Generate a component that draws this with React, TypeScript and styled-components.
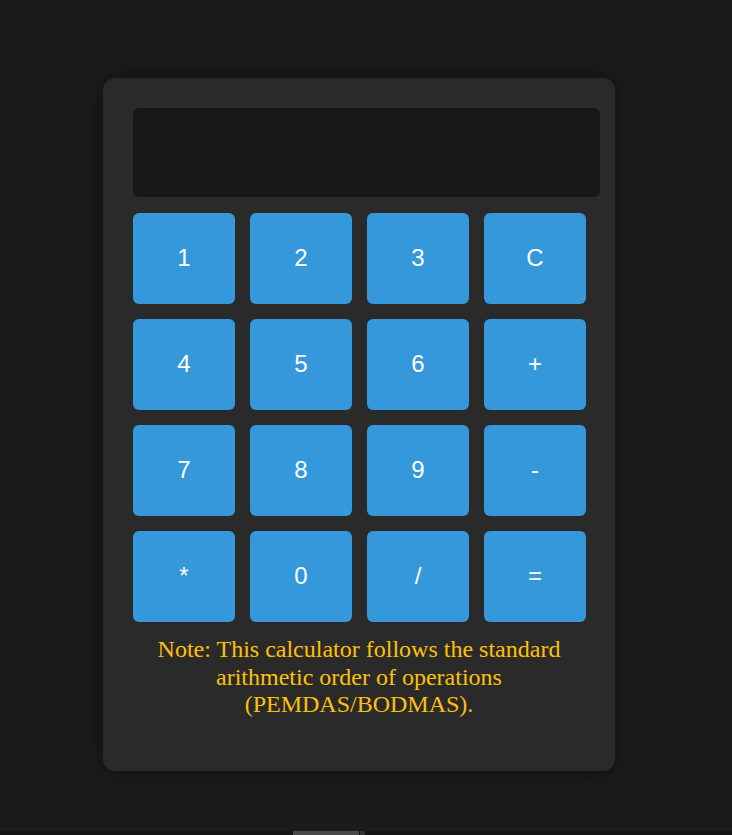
import React from "react";
import styled, { createGlobalStyle } from "styled-components";

const Global = createGlobalStyle`
  html, body { margin: 0; padding: 0; background: #1b1b1b; }
  body { font-family: "Liberation Serif", "Times New Roman", serif; min-height: 835px; }
`;

const Page = styled.div`
  display: flex;
  align-items: flex-start;
  padding: 78px 0 0 103px;
`;

const Card = styled.div`
  width: 512px;
  box-sizing: border-box;
  padding: 30px 15px 30px 30px;
  background: #2a2a2a;
  border-radius: 12px;
  box-shadow: 0 0 20px rgba(0, 0, 0, 0.45);
  display: flex;
  flex-direction: column;
`;

const Display = styled.div`
  height: 89px;
  background: #171717;
  border-radius: 6px;
  margin-bottom: 16px;
`;

const Keys = styled.div`
  display: grid;
  grid-template-columns: repeat(4, 102px);
  grid-auto-rows: 91px;
  column-gap: 15px;
  row-gap: 15px;
`;

const Key = styled.button`
  border: none;
  border-radius: 6px;
  background: #3498db;
  color: #ffffff;
  font-family: "Liberation Sans", Arial, sans-serif;
  font-size: 24px;
  display: flex;
  align-items: center;
  justify-content: center;
  padding: 0 0 2px;
  cursor: pointer;
`;

const Note = styled.p`
  width: 452px;
  margin: 14px 0 22px;
  text-align: center;
  color: #ffc107;
  font-family: "Liberation Serif", "Times New Roman", serif;
  font-size: 24px;
  line-height: 27.6px;
`;

const ScrollTrack = styled.div`
  position: fixed;
  left: 0;
  right: 0;
  bottom: 0;
  height: 4px;
  background: #141414;
`;

const ScrollThumb = styled.div`
  position: absolute;
  left: 293px;
  width: 66px;
  top: 0;
  bottom: 0;
  background: #4a4a4a;
`;

const ScrollNub = styled.div`
  position: absolute;
  left: 360px;
  width: 5px;
  top: 0;
  bottom: 0;
  background: #333333;
`;

const keys = ["1", "2", "3", "C", "4", "5", "6", "+", "7", "8", "9", "-", "*", "0", "/", "="];

export default function App() {
  return (
    <>
      <Global />
      <Page>
        <Card>
          <Display />
          <Keys>
            {keys.map((k) => (
              <Key key={k}>{k}</Key>
            ))}
          </Keys>
          <Note>
            Note: This calculator follows the standard arithmetic order of operations (PEMDAS/BODMAS).
          </Note>
        </Card>
      </Page>
      <ScrollTrack>
        <ScrollThumb />
        <ScrollNub />
      </ScrollTrack>
    </>
  );
}
